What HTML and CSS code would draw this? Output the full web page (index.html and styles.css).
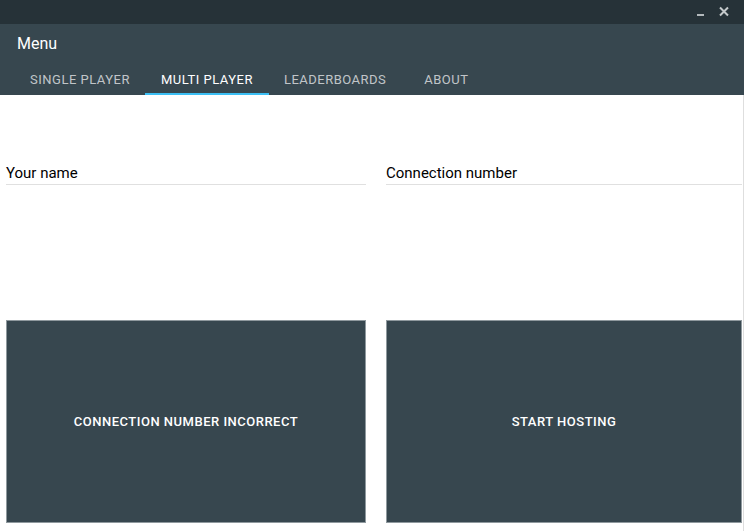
FILE: index.html
```html
<!DOCTYPE html>
<html>
<head>
<meta charset="utf-8">
<link rel="stylesheet" href="styles.css">
</head>
<body>
<div class="window">
  <div class="titlebar">
    <svg class="ctl" width="10" height="24" viewBox="0 0 10 24"><rect x="1" y="14" width="7" height="2" fill="#b3b9bc"/></svg>
    <svg class="ctl close" width="12" height="24" viewBox="0 0 12 24"><path d="M2 7.5 L10 15.5 M10 7.5 L2 15.5" stroke="#c4c9cb" stroke-width="2"/></svg>
  </div>
  <div class="appbar">
    <div class="title">Menu</div>
    <div class="tabs">
      <div class="tab">SINGLE PLAYER</div>
      <div class="tab active">MULTI PLAYER</div>
      <div class="tab">LEADERBOARDS</div>
      <div class="tab">ABOUT</div>
    </div>
  </div>
  <div class="content">
    <div class="grid">
      <div class="field">Your name</div>
      <div class="field">Connection number</div>
      <button class="btn">CONNECTION NUMBER INCORRECT</button>
      <button class="btn">START HOSTING</button>
    </div>
  </div>
</div>
</body>
</html>
```
FILE: styles.css
```css
* { box-sizing: border-box; }
html, body { margin: 0; padding: 0; }
body {
  width: 744px;
  height: 531px;
  overflow: hidden;
  font-family: Roboto, "Liberation Sans", sans-serif;
  background: #fff;
}
.window { display: flex; flex-direction: column; height: 531px; }
.titlebar {
  height: 24px;
  background: #263238;
  display: flex;
  justify-content: flex-end;
  align-items: flex-start;
  gap: 12px;
  padding-right: 14px;
}
.ctl { display: block; }
.appbar { background: #37474f; color: #fff; }
.title {
  font-size: 16px;
  line-height: 20px;
  padding: 10px 17px 7px;
}
.tabs { display: flex; padding-left: 15px; }
.tab {
  font-size: 13px;
  line-height: 16px;
  letter-spacing: 0.5px;
  padding: 11px 15px 5px;
  border-bottom: 2px solid transparent;
  color: rgba(255,255,255,0.7);
  min-width: 90px;
  text-align: center;
}
.tab.active {
  color: #fff;
  border-bottom-color: #3cbff4;
  padding-left: 16px;
  padding-right: 16px;
}
.content {
  flex: 1;
  border-right: 1px solid #dedede;
  padding: 68px 1px 0 6px;
}
.grid {
  display: grid;
  grid-template-columns: 360px 356px;
  column-gap: 20px;
  row-gap: 135px;
}
.field {
  font-size: 15px;
  line-height: 20px;
  padding-bottom: 1px;
  color: #000;
  border-bottom: 1px solid #e0e0e0;
}
.btn {
  height: 203px;
  background: #37474f;
  border: 1px solid #8f999e;
  color: #fff;
  font-family: Roboto, "Liberation Sans", sans-serif;
  font-size: 13px;
  font-weight: 500;
  letter-spacing: 0.5px;
  padding: 0;
}
```
